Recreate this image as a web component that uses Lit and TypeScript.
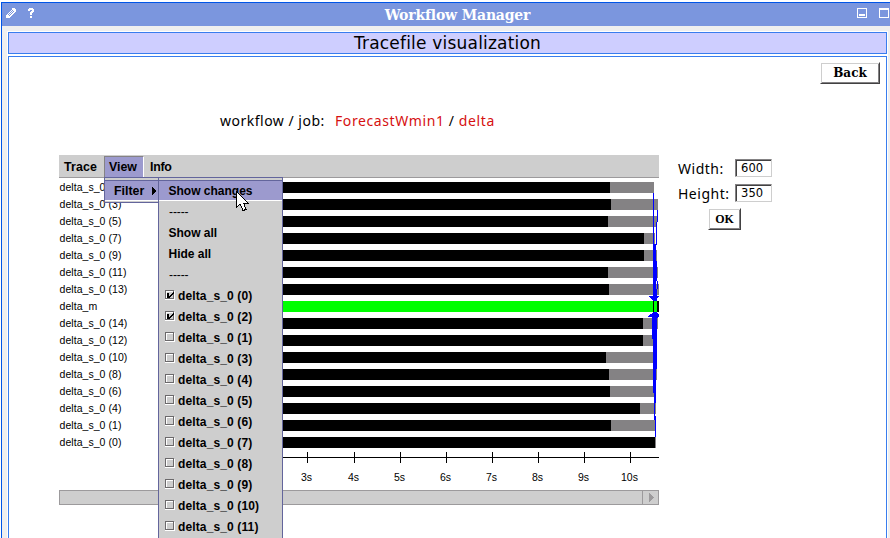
import { LitElement, html, css, svg } from "lit";
import { customElement } from "lit/decorators.js";
import { classMap } from "lit/directives/class-map.js";

interface Row { label: string; busy: number; end: number; master?: boolean }

const CHART_LEFT = 59;

// busy and end are x positions in window coordinates
const rows: Row[] = [
  { label: "delta_s_0", busy: 610, end: 654 },
  { label: "delta_s_0 (3)", busy: 611, end: 658 },
  { label: "delta_s_0 (5)", busy: 608, end: 657 },
  { label: "delta_s_0 (7)", busy: 644, end: 655 },
  { label: "delta_s_0 (9)", busy: 644, end: 657 },
  { label: "delta_s_0 (11)", busy: 608, end: 658 },
  { label: "delta_s_0 (13)", busy: 609, end: 659 },
  { label: "delta_m", busy: 657, end: 659, master: true },
  { label: "delta_s_0 (14)", busy: 643, end: 658 },
  { label: "delta_s_0 (12)", busy: 643, end: 656 },
  { label: "delta_s_0 (10)", busy: 606, end: 656 },
  { label: "delta_s_0 (8)", busy: 609, end: 657 },
  { label: "delta_s_0 (6)", busy: 610, end: 655 },
  { label: "delta_s_0 (4)", busy: 640, end: 656 },
  { label: "delta_s_0 (1)", busy: 611, end: 656 },
  { label: "delta_s_0 (0)", busy: 655, end: 656 },
];

const ticks = [
  [307, "3s"], [354, "4s"], [400, "5s"], [446, "6s"],
  [492, "7s"], [538, "8s"], [584, "9s"], [630, "10s"],
] as [number, string][];

const filters = [0, 2, 1, 3, 4, 5, 6, 7, 8, 9, 10, 11];

@customElement("trace-chart")
export class TraceChart extends LitElement {
  static styles = css`
    :host { display: block; position: relative; width: 600px; font: 10.5px/17px "Liberation Sans", sans-serif; letter-spacing: 0.05px; color: #000; }
    .rows { padding-top: 1px; }
    .row { display: flex; align-items: center; height: 17px; }
    .label { width: 101px; padding-left: 0.5px; box-sizing: border-box; white-space: nowrap; flex: none; }
    .bar { height: 11px; background: #000; flex: none; }
    .idle { height: 11px; background: #848284; flex: none; }
    .master .bar { background: #0f0; }
    .master .idle { background: #000; }
    .overlay { position: absolute; left: 0; top: 0; display: block; }
    .scroll { display: flex; justify-content: flex-end; height: 15px; margin-top: 39px; box-sizing: border-box; background: #cecece; border: 1px solid #9c9a9c; }
    .next { width: 16px; box-sizing: border-box; border-left: 1px solid #9c9a9c; display: flex; align-items: center; padding-left: 6px; }
    text { fill: #000; text-anchor: middle; font-size: 10.5px; }
  `;

  render() {
    return html`
      <div class="rows">
        ${rows.map(r => html`
          <div class=${classMap({ row: true, master: !!r.master })}>
            <span class="label">${r.label}</span>
            <span class="bar" style="width:${r.busy - CHART_LEFT - 101}px"></span>
            <span class="idle" style="width:${r.end - r.busy}px"></span>
          </div>`)}
      </div>
      <div class="scroll"><div class="next">
        <svg width="5" height="9" shape-rendering="crispEdges"><path d="M0 0L5 4.5L0 9Z" fill="#9c9a9c"/></svg>
      </div></div>
      <svg class="overlay" width="601" height="330" viewBox="59 178 601 330">
        <g shape-rendering="crispEdges">
          <g fill="#00f">
            <path d="M653 193h1v52h-1zM657 210h1v12h-1zM656 222h1v23h-1zM653 244h3v17h-3zM653 261h4v20h-4zM653 281h3v15h-3zM657 281h1v8h-1zM656 289h1v8h-1z"/>
            <path d="M649 296h10v1h-1v1h-1v3h-4v-1h-1v-1h-1v-1h-1v-1h-1z"/>
            <path d="M653 312h4v1h1v1h1v3h-1v1h-1v21h-5v-22h-4v-1h1v-1h1v-1h2v-1h1z"/>
            <path d="M653 339h4v30h-4zM653 369h3v24h-3zM654 393h2v10h-2zM654 403h1v17h-1zM655 416h1v21h-1z"/>
          </g>
          <path fill="#000" d="M653 301h1v11h-1zM657 301h2v11h-2zM282 457h377v1H282z"/>
          ${ticks.map(([x]) => svg`<rect x=${x} y="452" width="1" height="11"/>`)}
        </g>
        ${ticks.map(([x, t]) => svg`<text x=${x - 0.5} y="481">${t}</text>`)}
      </svg>`;
  }
}

@customElement("trace-menus")
export class TraceMenus extends LitElement {
  static styles = css`
    :host { display: block; position: relative; width: 600px; font: bold 12px/21px "Liberation Sans", sans-serif; color: #000; z-index: 1; }
    .bar { display: flex; height: 23px; box-sizing: border-box; background: #cecece; border-bottom: 1px solid #9c9a9c; line-height: 22px; font-size: 12.4px; }
    .menu { box-sizing: border-box; padding: 1px 5px 0; }
    .trace { width: 45px; padding-right: 0; letter-spacing: 0.15px; }
    .view { width: 40px; margin-top: 1px; padding-top: 0; background: #9c9ace; border-left: 1px solid #848284; border-top: 1px solid #848284; border-right: 1px solid #fff; padding-left: 4px; line-height: 20px; }
    .info { padding-left: 6px; letter-spacing: -0.3px; }
    .popup { position: absolute; box-sizing: border-box; background: #cecece; border: 1px solid #63659c; }
    .first { left: 45px; top: 22px; width: 55px; height: 26px; padding-top: 2px; }
    .item { display: flex; align-items: center; height: 21px; box-sizing: border-box; white-space: nowrap; }
    .active { background: #9c9ace; border-top: 1px solid #63659c; border-bottom: 1px solid #fff; line-height: 19px; }
    .first .active { padding: 1px 1px 0 9px; justify-content: space-between; font-size: 12.4px; }
    .arrow { display: block; margin-top: -1px; }
    .second { left: 99px; top: 22px; width: 125px; height: 370px; padding-top: 2px; border-bottom: 0; }
    .second .item { padding-left: 10px; }
    .second .active { padding: 2px 0 0 9.5px; margin-bottom: 1px; }
    .second .plain { padding-left: 9.5px; }
    .second .dashes { font-weight: normal; letter-spacing: -0.1px; }
    .second .check { padding-left: 6px; gap: 3px; letter-spacing: 0.13px; }
    .box { flex: none; display: block; position: relative; top: -2px; }
    .cursor { position: absolute; left: 177px; top: 36px; }
  `;

  private box(checked: boolean) {
    return html`<svg class="box" width="10" height="10" shape-rendering="crispEdges">
      <path fill="#fff" d="M1 1h9v9H0V9h1z"/>
      <path fill="#cecece" d="M2 2h6v6H2z"/>
      <path fill="#6b696b" d="M0 0h9v1H1v8H0zM8 1h1v8H1V8h7z"/>
      ${checked ? svg`<path d="M2 3h2v3h1V5h1V4h1V3h1V2h1v2H8v1H7v1H6v1H5v1H2z"/>` : ""}
    </svg>`;
  }

  render() {
    return html`
      <div class="bar">
        <span class="menu trace">Trace</span><span class="menu view">View</span><span class="menu info">Info</span>
      </div>
      <div class="popup first"><div class="item active">Filter
        <svg class="arrow" width="5" height="8" shape-rendering="crispEdges"><path d="M0 0h1v1h1v1h1v1h1v2h-1v1h-1v1h-1v1h-1z"/></svg></div></div>
      <div class="popup second">
        <div class="item active">Show changes</div>
        <div class="item dashes">-----</div>
        <div class="item plain">Show all</div>
        <div class="item plain">Hide all</div>
        <div class="item dashes">-----</div>
        ${filters.map((n, i) => html`<div class="item check">${this.box(i < 2)}<span>delta_s_0 (${n})</span></div>`)}
      </div>
      <svg class="cursor" width="13" height="21" shape-rendering="crispEdges">
        <path d="M.5 .5V16.5L4 13L7 19.5L10 18.5L7.5 12H12Z" fill="#fff" stroke="#000"/>
      </svg>`;
  }
}

@customElement("app-root")
export class AppRoot extends LitElement {
  static styles = css`
    :host { display: block; width: 890px; height: 538px; overflow: hidden; background: #fff; color: #000; font-family: "DejaVu Sans", sans-serif; }
    .window { margin: 2px 0 0 1px; height: 536px; box-sizing: border-box; border: 1px solid #0055e7; border-right: 0; border-bottom: 0; background: #efefef; display: flex; flex-direction: column; }
    .titlebar { display: grid; grid-template-columns: 60px 1fr 60px; height: 23px; background: #7b96de; flex: none; }
    .tools { display: flex; gap: 12px; padding: 5px 0 0 4px; }
    .tools.end { padding: 5px 0 0 27px; }
    .title { text-align: center; color: #fff; font: bold 14px/24px "DejaVu Serif", serif; padding-left: 23px; letter-spacing: -0.18px; white-space: nowrap; }
    .content { margin: 5px 2px 0 5px; flex: 1; background: #fff; padding: 1px 1px 0 1px; display: flex; flex-direction: column; }
    .heading { height: 22px; box-sizing: border-box; border: 1px solid #397dee; background: #ceceff; text-align: center; font-size: 17px; letter-spacing: 0.2px; line-height: 21px; flex: none; }
    .page { margin-top: 2px; flex: 1; border: 1px solid #397dee; border-bottom: 0; display: flex; flex-direction: column; }
    .top { display: flex; justify-content: flex-end; padding: 5px 6px 0 0; }
    .button { box-sizing: border-box; height: 22px; border: 1px solid; border-color: #fff #424142 #424142 #fff; box-shadow: inset 1px 1px #cecece, inset -1px -1px #848284; text-align: center; }
    .back { width: 60px; font: bold 12px/20px "DejaVu Serif", serif; }
    .ok { width: 33px; margin: -1px 0 0 30px; font: bold 12px/20px "Liberation Serif", serif; letter-spacing: 0; }
    .path { display: flex; margin: 29px 0 0 211px; height: 16px; line-height: 16px; font-size: 14px; font-family: "Noto Sans", sans-serif; letter-spacing: 0.6px; white-space: pre; }
    .path span:first-child { letter-spacing: 0.5px; width: 115px; }
    .red { color: #d61010; }
    .work { display: flex; margin: 26px 0 0 50px; }
    .size { margin: 4px 0 0 19px; width: 94px; font: 14px/20px "Noto Sans", sans-serif; letter-spacing: 0.5px; }
    .field { display: flex; justify-content: space-between; height: 18px; margin-bottom: 7px; white-space: nowrap; }
    .input { width: 37px; height: 18px; box-sizing: border-box; border: 1px solid; border-color: #848284 #cecece #cecece #848284; box-shadow: inset 1px 1px #424142; padding-left: 5px; font: 11.5px/17px "DejaVu Sans", sans-serif; letter-spacing: 0.1px; }
  `;

  render() {
    return html`
      <div class="window">
        <div class="titlebar">
          <div class="tools">
            <svg width="10" height="10" shape-rendering="crispEdges"><path d="M6 0h3v1h1v3H9v1H8v1H7v1H6v1H5v1H4v1H0V7h1V6h1V5h1V4h1V3h1V2h1z" fill="#fff"/><path d="M5 3h1v1H5zM7 3h1v1H7zM4 4h1v1H4zM6 4h1v1H6zM3 5h1v1H3zM5 5h1v1H5zM2 6h1v1H2zM4 6h1v1H4zM3 7h1v1H3zM6 2h1v1H6z" fill="#7b96de"/></svg>
            <svg width="6" height="10" shape-rendering="crispEdges"><path d="M1 0h4v1h1v3H5v1H4v2H2V4h1V3h1V2H2v1H0V1h1zM2 8h2v2H2z" fill="#fff"/></svg>
          </div>
          <div class="title">Workflow Manager</div>
          <div class="tools end">
            <svg width="10" height="10" shape-rendering="crispEdges"><path d="M.5 .5h9v9h-9z" fill="none" stroke="#fff"/><path d="M2 6h6v2H2z" fill="#fff"/></svg>
            <svg width="10" height="10" shape-rendering="crispEdges"><path d="M.5 .5h9v9h-9z" fill="none" stroke="#fff"/><path d="M0 0h10v2H0z" fill="#fff"/></svg>
          </div>
        </div>
        <div class="content">
          <div class="heading">Tracefile visualization</div>
          <div class="page">
            <div class="top"><div class="button back">Back</div></div>
            <div class="path"><span>workflow / job:  </span><span class="red">ForecastWmin1</span><span> / </span><span class="red">delta</span></div>
            <div class="work">
              <div><trace-menus></trace-menus><trace-chart></trace-chart></div>
              <div class="size">
                <div class="field"><span>Width:</span><span class="input">600</span></div>
                <div class="field"><span>Height:</span><span class="input">350</span></div>
                <div class="button ok">OK</div>
              </div>
            </div>
          </div>
        </div>
      </div>`;
  }
}
